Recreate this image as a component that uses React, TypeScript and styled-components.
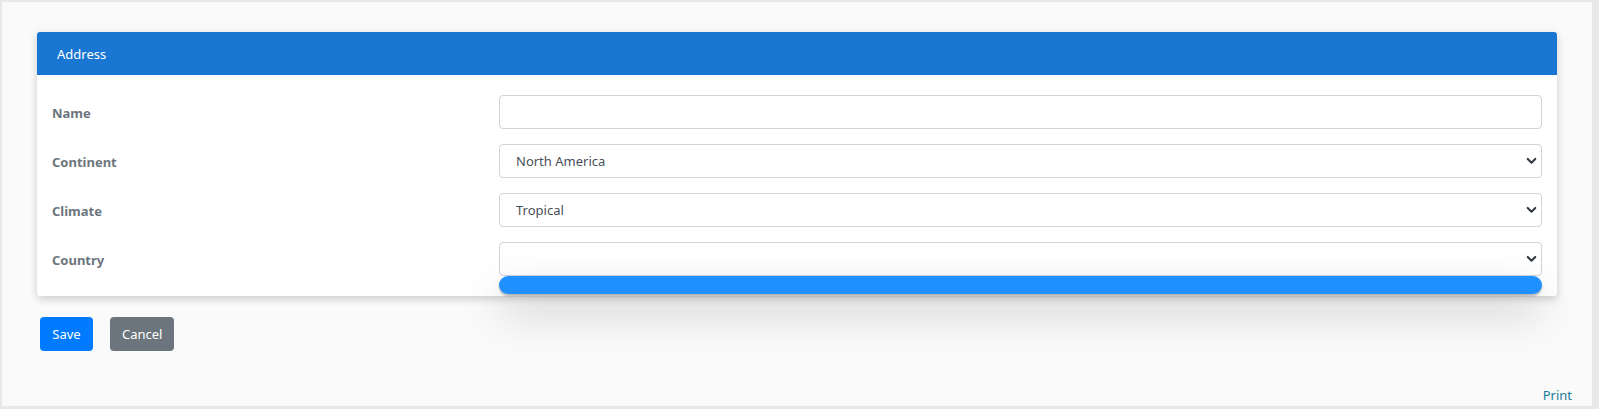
import React from "react";
import styled, { createGlobalStyle } from "styled-components";

const Global = createGlobalStyle`
  html, body { margin: 0; padding: 0; height: 100%; }
  body { font-family: "Noto Sans", "Open Sans", Arial, sans-serif; background: #fafafa; }
  #root { height: 100%; }
  * { box-sizing: border-box; }
`;

const Frame = styled.div`
  height: 409px;
  border-style: solid;
  border-color: #e8e8e8;
  border-width: 2px 7px 3px 2px;
  background: #fafafa;
  display: flex;
  flex-direction: column;
`;

const Main = styled.div`
  padding: 30px 35px 0 35px;
  flex: 1;
`;

const Card = styled.div`
  background: #fff;
  border-radius: 3px;
  box-shadow: 0 3px 8px rgba(0, 0, 0, 0.18);
`;

const CardHeader = styled.div`
  height: 43px;
  background: #1976d2;
  color: #fff;
  font-size: 13px;
  display: flex;
  align-items: center;
  padding-left: 20px;
  border-radius: 3px 3px 0 0;
`;

const CardBody = styled.div`
  padding: 20px 15px;
  display: grid;
  grid-template-columns: 447px 1fr;
  row-gap: 15px;
`;

const Label = styled.label`
  font-size: 13px;
  font-weight: 700;
  color: #6c757d;
  display: flex;
  align-items: center;
  height: 34px;
  padding-top: 2px;
`;

const Input = styled.input`
  height: 34px;
  width: 100%;
  border: 1px solid #ced4da;
  border-radius: 4px;
  padding: 0 16px;
  font-size: 13px;
  font-family: inherit;
  color: #495057;
  background: #fff;
  outline: none;
`;

const SelectWrap = styled.div`
  position: relative;
  height: 34px;
`;

const Select = styled.select`
  appearance: none;
  -webkit-appearance: none;
  height: 34px;
  width: 100%;
  border: 1px solid #ced4da;
  border-radius: 4px;
  padding: 0 16px;
  font-size: 13px;
  font-family: inherit;
  color: #495057;
  background: #fff;
  outline: none;
`;

const Chevron = styled.svg`
  position: absolute;
  right: 5px;
  top: 12px;
  width: 11px;
  height: 10px;
  pointer-events: none;
`;

const DropList = styled.div`
  position: absolute;
  left: 0;
  right: 0;
  top: 34px;
  height: 18px;
  border-radius: 9px;
  background: #1e90ff;
  box-shadow: 0 2px 2px rgba(0, 0, 0, 0.25), 0 18px 40px rgba(0, 0, 0, 0.22);
  z-index: 5;
`;

const Actions = styled.div`
  display: flex;
  gap: 17px;
  padding: 21px 0 0 3px;
`;

const Button = styled.button<{ $variant: "primary" | "secondary" }>`
  height: 34px;
  padding: 0 12px;
  border: none;
  border-radius: 4px;
  font-size: 13px;
  font-family: inherit;
  color: #fff;
  background: ${(p) => (p.$variant === "primary" ? "#007bff" : "#6c757d")};
  min-width: ${(p) => (p.$variant === "primary" ? "53px" : "64px")};
`;

const Footer = styled.div`
  display: flex;
  justify-content: flex-end;
  padding: 0 20px 0 0;
  height: 20px;
`;

const PrintLink = styled.a`
  font-size: 13px;
  color: #1a7d98;
  line-height: 18px;
  cursor: pointer;
`;

const ChevronIcon = () => (
  <Chevron viewBox="0 0 16 14">
    <path d="M2.5 4l5.5 5.5 5.5-5.5" fill="none" stroke="#343a40" strokeWidth="3" strokeLinecap="round" strokeLinejoin="round" />
  </Chevron>
);

export default function App() {
  return (
    <>
      <Global />
      <Frame>
        <Main>
          <Card>
            <CardHeader>Address</CardHeader>
            <CardBody>
              <Label>Name</Label>
              <Input type="text" defaultValue="" />
              <Label>Continent</Label>
              <SelectWrap>
                <Select defaultValue="North America">
                  <option>North America</option>
                </Select>
                <ChevronIcon />
              </SelectWrap>
              <Label>Climate</Label>
              <SelectWrap>
                <Select defaultValue="Tropical">
                  <option>Tropical</option>
                </Select>
                <ChevronIcon />
              </SelectWrap>
              <Label>Country</Label>
              <SelectWrap>
                <Select defaultValue="">
                  <option value=""></option>
                </Select>
                <ChevronIcon />
                <DropList />
              </SelectWrap>
            </CardBody>
          </Card>
          <Actions>
            <Button $variant="primary">Save</Button>
            <Button $variant="secondary">Cancel</Button>
          </Actions>
        </Main>
        <Footer>
          <PrintLink>Print</PrintLink>
        </Footer>
      </Frame>
    </>
  );
}
